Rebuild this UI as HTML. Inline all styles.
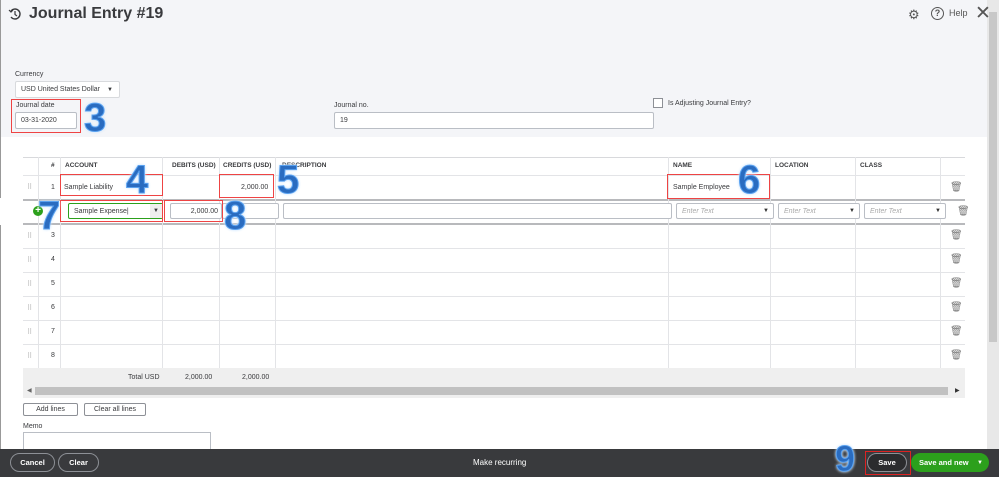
<!DOCTYPE html><html><head><style>
*{box-sizing:border-box;margin:0;padding:0}
body{width:999px;height:477px;overflow:hidden;font-family:"Liberation Sans",sans-serif;background:#fff;position:relative;color:#393a3d}
.a{position:absolute}
.s{font-size:7px;color:#393a3d}
.inp{position:absolute;background:#fff;border:1px solid #babec5;border-radius:2px;font-size:7px;padding-left:5px;display:flex;align-items:center}
.red{position:absolute;border:1px solid #e44}
.num{position:absolute;font-size:40px;font-weight:bold;color:#2a6cc0;line-height:1;-webkit-text-stroke:1px #5aa2f0;text-shadow:0 0 3px #cfe6ff,0 0 3px #cfe6ff}
.vl{position:absolute;top:157px;height:211px;width:1px;background:#e3e4e7}
.hl{position:absolute;left:23px;width:942px;height:1px;background:#e3e4e7}
.th{position:absolute;top:162px;font-size:6.5px;font-weight:bold;color:#393a3d}
.tr{position:absolute;width:8px;height:9px}
.btn{position:absolute;border-radius:13px;font-size:7.5px;font-weight:bold;display:flex;align-items:center;justify-content:center}
</style></head><body>
<div class="a" style="left:0;top:0;width:987px;height:137px;background:#f4f5f8"></div>
<div class="a" style="left:987px;top:0;width:12px;height:449px;background:#e8e8e8"></div>
<div class="a" style="left:989px;top:12px;width:8px;height:330px;background:#c8c8c8"></div>
<div class="a" style="left:0;top:0;width:1px;height:449px;background:#999"></div>
<svg class="a" style="left:8px;top:7px" width="14" height="14" viewBox="0 0 14 14"><path d="M3 4a5 5 0 1 1 0 6" fill="none" stroke="#393a3d" stroke-width="1.4"/><path d="M7 4v3.5l2 1.5" fill="none" stroke="#393a3d" stroke-width="1.2"/><path d="M1 3l2 2 2-2" fill="none" stroke="#393a3d" stroke-width="1.2"/></svg>
<div class="a" style="left:29px;top:5px;font-size:16px;font-weight:bold;color:#393a3d">Journal Entry #19</div>
<div class="a" style="left:908px;top:7px;font-size:13px;color:#555">⚙</div>
<div class="a" style="left:931px;top:7px;width:13px;height:13px;border:1.3px solid #555;border-radius:50%;font-size:9px;text-align:center;line-height:10px;font-weight:bold;color:#555">?</div>
<div class="a" style="left:949px;top:8px;font-size:9px;color:#555">Help</div>
<div class="a" style="left:975px;top:2px;font-size:19px;color:#555">✕</div>
<div class="a s" style="left:15px;top:71px">Currency</div>
<div class="inp" style="left:15px;top:81px;width:105px;height:17px;border-color:#d8dadd">USD United States Dollar<span style="position:absolute;right:6px;font-size:6px">▼</span></div>
<div class="a s" style="left:16px;top:102px">Journal date</div>
<div class="inp" style="left:15px;top:112px;width:62px;height:17px">03-31-2020</div>
<div class="red" style="left:11px;top:99px;width:70px;height:34px"></div>
<div class="num" style="left:84px;top:98px">3</div>
<div class="a s" style="left:334px;top:102px">Journal no.</div>
<div class="inp" style="left:334px;top:112px;width:320px;height:17px">19</div>
<div class="a" style="left:653px;top:98px;width:10px;height:10px;border:1px solid #8d9096;background:#fff"></div>
<div class="a s" style="left:668px;top:100px">Is Adjusting Journal Entry?</div>
<!-- table -->
<div class="hl" style="top:157px;background:#d8d9dc"></div>
<div class="hl" style="top:175px"></div>
<div class="hl" style="top:199px;height:2px;background:#b8b9bc"></div>
<div class="hl" style="top:223px;height:2px;background:#b8b9bc"></div>
<div class="hl" style="top:248px"></div><div class="hl" style="top:272px"></div><div class="hl" style="top:296px"></div><div class="hl" style="top:320px"></div><div class="hl" style="top:344px"></div>
<div class="vl" style="left:38px"></div><div class="vl" style="left:60px"></div><div class="vl" style="left:162px"></div><div class="vl" style="left:219px"></div><div class="vl" style="left:275px"></div><div class="vl" style="left:668px"></div><div class="vl" style="left:770px"></div><div class="vl" style="left:855px"></div><div class="vl" style="left:940px"></div>
<div class="th" style="left:51px">#</div><div class="th" style="left:65px">ACCOUNT</div><div class="th" style="left:172px">DEBITS (USD)</div><div class="th" style="left:223px">CREDITS (USD)</div><div class="th" style="left:282px">DESCRIPTION</div><div class="th" style="left:673px">NAME</div><div class="th" style="left:775px">LOCATION</div><div class="th" style="left:860px">CLASS</div>
<div class="a" style="left:0;top:198px;width:23px;height:27px;background:#fff"></div>
<div class="a s" style="left:27px;top:183px;color:#aaa">⠿</div><div class="a s" style="left:51px;top:184px">1</div>
<div class="a s" style="left:64px;top:184px">Sample Liability</div>
<div class="a s" style="left:241px;top:184px">2,000.00</div>
<div class="a s" style="left:673px;top:184px">Sample Employee</div>
<div class="a" style="left:33px;top:206px;width:10px;height:10px;border-radius:50%;background:#2ca01c;color:#fff;font-size:10px;line-height:9px;text-align:center;font-weight:bold">+</div>
<div class="inp" style="left:68px;top:203px;width:95px;height:16px;border-color:#2ca01c">Sample Expense|<span style="position:absolute;right:0;top:0;width:12px;height:14px;background:#eee;font-size:6px;text-align:center;line-height:14px">▼</span></div>
<div class="inp" style="left:170px;top:203px;width:52px;height:16px;justify-content:flex-end;padding-right:3px">2,000.00</div>
<div class="inp" style="left:222px;top:203px;width:57px;height:16px"></div>
<div class="inp" style="left:283px;top:203px;width:389px;height:16px"></div>
<div class="inp" style="left:676px;top:203px;width:98px;height:16px;color:#aaa;font-style:italic">Enter Text<span style="position:absolute;right:4px;color:#333;font-style:normal;font-size:6px">▼</span></div>
<div class="inp" style="left:778px;top:203px;width:82px;height:16px;color:#aaa;font-style:italic">Enter Text<span style="position:absolute;right:4px;color:#333;font-style:normal;font-size:6px">▼</span></div>
<div class="inp" style="left:864px;top:203px;width:82px;height:16px;color:#aaa;font-style:italic">Enter Text<span style="position:absolute;right:4px;color:#333;font-style:normal;font-size:6px">▼</span></div>
<div class="a s" style="left:27px;top:232px;color:#aaa">⠿</div><div class="a s" style="left:51px;top:232px">3</div>
<div class="a s" style="left:27px;top:256px;color:#aaa">⠿</div><div class="a s" style="left:51px;top:256px">4</div>
<div class="a s" style="left:27px;top:280px;color:#aaa">⠿</div><div class="a s" style="left:51px;top:280px">5</div>
<div class="a s" style="left:27px;top:304px;color:#aaa">⠿</div><div class="a s" style="left:51px;top:304px">6</div>
<div class="a s" style="left:27px;top:328px;color:#aaa">⠿</div><div class="a s" style="left:51px;top:328px">7</div>
<div class="a s" style="left:27px;top:352px;color:#aaa">⠿</div><div class="a s" style="left:51px;top:352px">8</div>
<div class="a" style="left:950px;top:182px;font-size:10px;color:#777">🗑</div>
<div class="a" style="left:957px;top:206px;font-size:10px;color:#777">🗑</div>
<div class="a" style="left:950px;top:230px;font-size:10px;color:#777">🗑</div>
<div class="a" style="left:950px;top:254px;font-size:10px;color:#777">🗑</div>
<div class="a" style="left:950px;top:278px;font-size:10px;color:#777">🗑</div>
<div class="a" style="left:950px;top:302px;font-size:10px;color:#777">🗑</div>
<div class="a" style="left:950px;top:326px;font-size:10px;color:#777">🗑</div>
<div class="a" style="left:950px;top:350px;font-size:10px;color:#777">🗑</div>
<div class="a" style="left:23px;top:368px;width:942px;height:30px;background:#efefef"></div>
<div class="a s" style="left:128px;top:374px">Total USD</div><div class="a s" style="left:185px;top:374px">2,000.00</div><div class="a s" style="left:242px;top:374px">2,000.00</div>
<div class="a" style="left:35px;top:387px;width:913px;height:8px;background:#c1c1c1"></div>
<div class="a" style="left:27px;top:387px;font-size:6px;color:#666">◀</div><div class="a" style="left:955px;top:387px;font-size:6px;color:#333">▶</div>
<div class="a" style="left:23px;top:403px;width:55px;height:13px;border:1px solid #8d9096;border-radius:2px;font-size:7px;text-align:center;line-height:11px">Add lines</div>
<div class="a" style="left:84px;top:403px;width:62px;height:13px;border:1px solid #8d9096;border-radius:2px;font-size:7px;text-align:center;line-height:11px">Clear all lines</div>
<div class="a s" style="left:23px;top:423px">Memo</div>
<div class="a" style="left:23px;top:432px;width:188px;height:20px;border:1px solid #babec5"></div>
<!-- red boxes & numbers -->
<div class="red" style="left:60px;top:174px;width:103px;height:22px"></div>
<div class="red" style="left:219px;top:174px;width:55px;height:24px"></div>
<div class="red" style="left:667px;top:174px;width:103px;height:25px"></div>
<div class="red" style="left:60px;top:200px;width:103px;height:22px"></div>
<div class="red" style="left:164px;top:200px;width:59px;height:22px"></div>
<div class="num" style="left:126px;top:160px">4</div>
<div class="num" style="left:277px;top:160px">5</div>
<div class="num" style="left:738px;top:160px">6</div>
<div class="num" style="left:38px;top:196px">7</div>
<div class="num" style="left:224px;top:196px">8</div>
<!-- bottom bar -->
<div class="a" style="left:0;top:449px;width:999px;height:28px;background:#393a3d"></div>
<div class="btn" style="left:10px;top:453px;width:45px;height:19px;border:1px solid #8d9096;color:#fff">Cancel</div>
<div class="btn" style="left:58px;top:453px;width:41px;height:19px;border:1px solid #8d9096;color:#fff">Clear</div>
<div class="a" style="left:473px;top:458px;font-size:8px;color:#fff">Make recurring</div>
<div class="num" style="left:835px;top:441px;font-size:36px">9</div>
<div class="btn" style="left:867px;top:453px;width:40px;height:19px;border:1px solid #8d9096;color:#fff;background:#2b2c2e">Save</div>
<div class="red" style="left:865px;top:451px;width:46px;height:24px;border-color:#d22"></div>
<div class="btn" style="left:911px;top:453px;width:78px;height:19px;background:#2ca01c;color:#fff;justify-content:flex-start;padding-left:8px">Save and new<span style="position:absolute;right:6px;font-size:6px">▼</span></div>
</body></html>
